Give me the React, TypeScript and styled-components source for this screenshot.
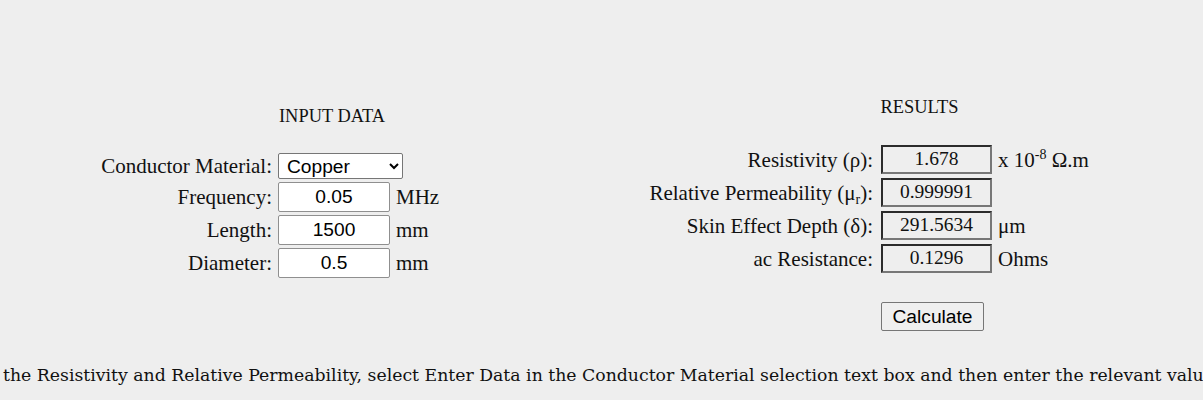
import React from "react";
import styled, { createGlobalStyle } from "styled-components";

const GlobalStyle = createGlobalStyle`
  html, body {
    margin: 0;
    padding: 0;
    background: #eeeeee;
  }
  body {
    font-family: "Liberation Serif", "Times New Roman", serif;
    color: #111111;
  }
`;

const Page = styled.div`
  width: 1203px;
  height: 400px;
  overflow: hidden;
  background: #eeeeee;
`;

const Panels = styled.div`
  display: flex;
  align-items: flex-start;
  height: 331px;
`;

const Panel = styled.section<{ $top: number; $left: number; $width: number }>`
  box-sizing: border-box;
  padding-top: ${(p) => p.$top}px;
  margin-left: ${(p) => p.$left}px;
  width: ${(p) => p.$width}px;
  display: flex;
  flex-direction: column;
`;

const Title = styled.h2<{ $shift?: number; $gap: number }>`
  margin: 0 0 ${(p) => p.$gap}px 0;
  padding-left: ${(p) => p.$shift ?? 0}px;
  font-size: 18.4px;
  font-weight: normal;
  line-height: 24px;
  text-align: center;
  color: #111;
`;

const Rows = styled.div<{ $gap: number }>`
  display: flex;
  flex-direction: column;
  gap: ${(p) => p.$gap}px;
`;

const Row = styled.div<{ $h: number }>`
  display: flex;
  align-items: center;
  height: ${(p) => p.$h}px;
`;

const Label = styled.label<{ $w: number; $gap: number }>`
  width: ${(p) => p.$w}px;
  margin-right: ${(p) => p.$gap}px;
  text-align: right;
  font-size: 21px;
  line-height: 24px;
  white-space: nowrap;
`;

const Unit = styled.span`
  margin-left: 6px;
  font-size: 21px;
  line-height: 24px;
  white-space: nowrap;
`;

const Sup = styled.sup`
  font-size: 14px;
  line-height: 0;
  vertical-align: 0.55em;
`;

const Sub = styled.sub`
  font-size: 14px;
  line-height: 0;
  vertical-align: -0.25em;
`;

const Select = styled.select`
  box-sizing: border-box;
  width: 125px;
  height: 26px;
  padding: 0 2px 0 4px;
  font-family: "Liberation Sans", Arial, sans-serif;
  font-size: 19.2px;
  color: #000;
  background: #ffffff;
  border: 1px solid #767676;
  border-radius: 2px;
`;

const NumInput = styled.input`
  box-sizing: border-box;
  width: 112px;
  height: 30px;
  padding: 0 2px;
  font-family: "Liberation Sans", Arial, sans-serif;
  font-size: 19.2px;
  text-align: center;
  color: #000;
  background: #ffffff;
  border: 1px solid #8f8f8f;
  border-radius: 2px;
  outline: none;
`;

const ResultBox = styled.div`
  box-sizing: border-box;
  width: 111px;
  height: 29px;
  border-style: solid;
  border-width: 2px;
  border-color: #2b2b2b #777777 #777777 #2b2b2b;
  background: #eeeeee;
  font-size: 19.5px;
  line-height: 24px;
  text-align: center;
`;

const Button = styled.button`
  box-sizing: border-box;
  align-self: flex-start;
  margin-left: 261px;
  margin-top: 29px;
  width: 103px;
  height: 29px;
  padding: 0;
  font-family: "Liberation Sans", Arial, sans-serif;
  font-size: 19.2px;
  color: #000;
  background: #efefef;
  border: 1px solid #767676;
  border-radius: 2px;
`;

const Note = styled.p`
  margin: 34px 0 0 0;
  padding-left: 3px;
  font-family: "DejaVu Serif", Georgia, serif;
  font-size: 17.3px;
  line-height: 21px;
  white-space: nowrap;
  color: #111;
`;

const inputs = [
  { label: "Frequency:", value: "0.05", unit: "MHz" },
  { label: "Length:", value: "1500", unit: "mm" },
  { label: "Diameter:", value: "0.5", unit: "mm" },
];

export default function App() {
  return (
    <Page>
      <GlobalStyle />
      <Panels>
        <Panel $top={104} $left={92} $width={480}>
          <Title $gap={25}>INPUT DATA</Title>
          <Rows $gap={3}>
            <Row $h={26}>
              <Label $w={180} $gap={6}>Conductor Material:</Label>
              <Select defaultValue="Copper">
                <option>Copper</option>
                <option>Aluminium</option>
                <option>Enter Data</option>
              </Select>
            </Row>
            {inputs.map((r) => (
              <Row $h={30} key={r.label}>
                <Label $w={180} $gap={6}>{r.label}</Label>
                <NumInput defaultValue={r.value} />
                <Unit>{r.unit}</Unit>
              </Row>
            ))}
          </Rows>
        </Panel>
        <Panel $top={95} $left={48} $width={583}>
          <Title $gap={26} $shift={16}>RESULTS</Title>
          <Rows $gap={4}>
            <Row $h={29}>
              <Label $w={253} $gap={8}>Resistivity (ρ):</Label>
              <ResultBox>1.678</ResultBox>
              <Unit>
                x 10<Sup>-8</Sup> Ω.m
              </Unit>
            </Row>
            <Row $h={29}>
              <Label $w={253} $gap={8}>
                Relative Permeability (μ<Sub>r</Sub>):
              </Label>
              <ResultBox>0.999991</ResultBox>
            </Row>
            <Row $h={29}>
              <Label $w={253} $gap={8}>Skin Effect Depth (δ):</Label>
              <ResultBox>291.5634</ResultBox>
              <Unit>μm</Unit>
            </Row>
            <Row $h={29}>
              <Label $w={253} $gap={8}>ac Resistance:</Label>
              <ResultBox>0.1296</ResultBox>
              <Unit>Ohms</Unit>
            </Row>
          </Rows>
          <Button>Calculate</Button>
        </Panel>
      </Panels>
      <Note>
        the Resistivity and Relative Permeability, select Enter Data in the Conductor Material selection text box and then enter the relevant values.
      </Note>
    </Page>
  );
}
